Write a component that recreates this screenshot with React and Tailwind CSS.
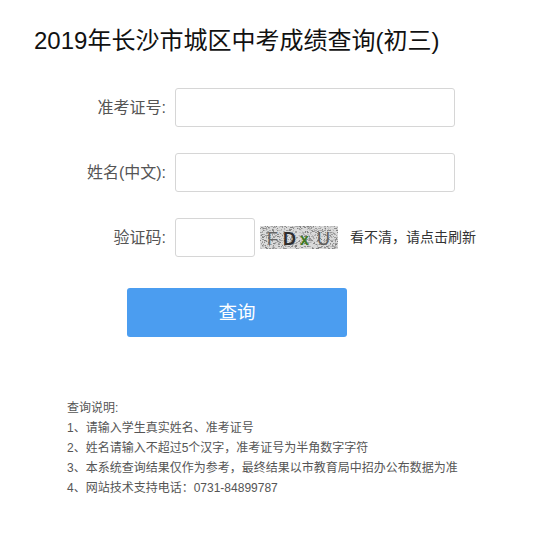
import React from 'react';

const font = { fontFamily: '"Liberation Sans", "Noto Sans CJK SC", sans-serif' };

// speckle noise for the captcha picture, fixed seed so it is stable
function makeNoise() {
  let seed = 7;
  const rnd = () => {
    seed = (seed * 16807) % 2147483647;
    return seed / 2147483647;
  };
  const dots = [];
  for (let i = 0; i < 1000; i++) {
    const g = Math.floor(125 + rnd() * 100);
    dots.push({
      x: Math.floor(rnd() * 78),
      y: Math.floor(rnd() * 23),
      w: rnd() > 0.6 ? 2 : 1,
      c: `rgb(${g},${g},${g})`,
    });
  }
  return dots;
}

const noise = makeNoise();

function Captcha() {
  return (
    <svg width="78" height="23" viewBox="0 0 78 23" className="ml-[5px] shrink-0">
      <rect width="78" height="23" fill="#dadada" />
      {noise.map((d, i) => (
        <rect key={i} x={d.x} y={d.y} width={d.w} height="1" fill={d.c} />
      ))}
      <text x="7" y="19" fontSize="18" fill="#666" fontFamily="Liberation Sans">F</text>
      <text x="23" y="19" fontSize="18" fill="#2e2e2e" fontWeight="bold" fontFamily="Liberation Sans">D</text>
      <text x="40" y="19" fontSize="16" fill="#3f7a22" fontWeight="bold" fontFamily="Liberation Sans">x</text>
      <text x="57" y="19" fontSize="18" fill="#5e5e5e" fontFamily="Liberation Sans">U</text>
    </svg>
  );
}

function Row({ label, children }) {
  return (
    <div className="flex items-center h-[39px]">
      <label className="w-[166px] text-right text-[16px] text-[#555]">{label}</label>
      <div className="ml-[9px] flex items-center">{children}</div>
    </div>
  );
}

export default function App() {
  return (
    <div className="w-[552px] h-[538px] bg-white overflow-hidden" style={font}>
      <h1 className="pl-[34px] pt-[25px] text-[24px] leading-[32px] text-[#111]">
        2019年长沙市城区中考成绩查询(初三)
      </h1>

      {/* Form */}
      <div className="mt-[31px] flex flex-col gap-[26px]">
        <Row label="准考证号:">
          <input className="w-[280px] h-[39px] border border-[#d6d6d6] rounded-[3px] outline-none" />
        </Row>
        <Row label="姓名(中文):">
          <input className="w-[280px] h-[39px] border border-[#d6d6d6] rounded-[3px] outline-none" />
        </Row>
        <Row label="验证码:">
          <input className="w-[80px] h-[39px] border border-[#d6d6d6] rounded-[3px] outline-none" />
          <Captcha />
          <span className="ml-[12px] text-[14px] text-[#333] whitespace-nowrap">看不清，请点击刷新</span>
        </Row>
      </div>

      <div className="pl-[127px] mt-[31px]">
        <button className="w-[220px] h-[49px] rounded-[3px] bg-[#4b9df0] text-white text-[18.5px]">
          查询
        </button>
      </div>

      {/* Notes */}
      <div className="pl-[67px] mt-[61px] text-[12px] leading-[20px] text-[#555]">
        <p>查询说明:</p>
        <p>1、请输入学生真实姓名、准考证号</p>
        <p>2、姓名请输入不超过5个汉字，准考证号为半角数字字符</p>
        <p>3、本系统查询结果仅作为参考，最终结果以市教育局中招办公布数据为准</p>
        <p>4、网站技术支持电话：0731-84899787</p>
      </div>
    </div>
  );
}
